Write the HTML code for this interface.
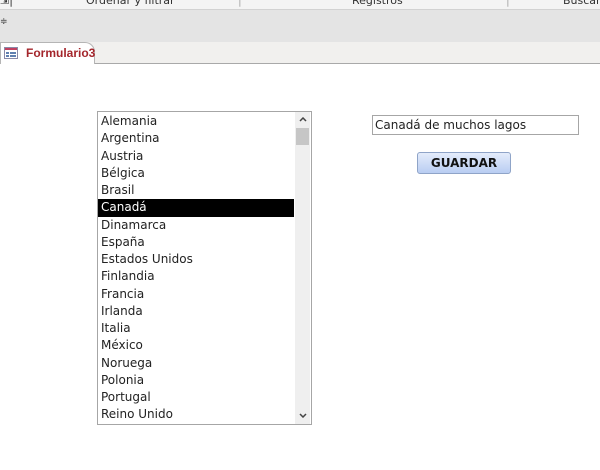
<!DOCTYPE html>
<html><head><meta charset="utf-8"><style>
*{margin:0;padding:0;box-sizing:border-box}
body{width:600px;height:470px;background:#fff;font-family:"DejaVu Sans","Liberation Sans",sans-serif;position:relative;overflow:hidden}
.top{position:absolute;left:0;top:0;width:600px;height:10px;background:#f4f4f4;border-bottom:1px solid #d2d2d2;overflow:hidden;font-size:11px;color:#333}
.top span{position:absolute;top:-6px}
.gray{position:absolute;left:0;top:10px;width:600px;height:32px;background:#e4e4e4}
.tabs{position:absolute;left:0;top:42px;width:600px;height:22px;background:#f1f0ee;border-bottom:1px solid #a9a9a9}
.tab{position:absolute;left:0;top:0;width:95px;height:22px;background:#fff;border:1px solid #b5b5b5;border-bottom:none;border-radius:0 10px 0 0;font-size:12px;font-weight:bold;color:#a4262c;font-family:"Liberation Sans",sans-serif}
.list{position:absolute;left:97px;top:111px;width:215px;height:314px;border:1px solid #a6a6a6;background:#fff;overflow:hidden;padding-top:1px}
.item{height:17.25px;line-height:17px;padding-left:3px;font-size:12px;color:#222;width:196px}
.sel{background:#000;color:#fff}
.sb{position:absolute;right:1px;top:0;width:15px;height:312px;background:#efefef}
.thumb{position:absolute;left:1px;top:16px;width:13px;height:17px;background:#c6c6c6}
.txt{position:absolute;left:372px;top:115px;width:207px;height:20px;border:1px solid #a6a6a6;font-size:12px;line-height:18px;padding-left:2px;color:#222}
.btn{position:absolute;left:417px;top:152px;width:94px;height:22px;border:1px solid #8fa4c8;border-radius:3px;background:linear-gradient(#e4ecfb,#b9cdf2);font-size:12px;font-weight:bold;text-align:center;line-height:20px;color:#111}
</style></head><body>
<div class="top"><span style="left:0">⇲|</span><span style="left:86px">Ordenar y filtrar</span><span style="left:238px;color:#aaa">|</span><span style="left:352px">Registros</span><span style="left:506px;color:#aaa">|</span><span style="left:563px">Buscar</span></div>
<div class="gray"><span style="position:absolute;left:0;top:7px;font-size:9px;color:#333">≑</span></div>
<div class="tabs"><div class="tab">
<svg style="position:absolute;left:3px;top:4px" width="14" height="12"><rect x="0.5" y="0.5" width="13" height="11" fill="#fff" stroke="#8a8aa8"/><rect x="1" y="1" width="12" height="2" fill="#c04060"/><rect x="2" y="5" width="3" height="2" fill="#6080b0"/><rect x="6" y="5" width="6" height="2" fill="#6080b0"/><rect x="2" y="8" width="3" height="2" fill="#6080b0"/><rect x="6" y="8" width="6" height="2" fill="#6080b0"/></svg>
<span style="position:absolute;left:25px;top:3px">Formulario3</span></div></div>
<div class="list">
<div class="item">Alemania</div><div class="item">Argentina</div><div class="item">Austria</div><div class="item">Bélgica</div><div class="item">Brasil</div><div class="item sel">Canadá</div><div class="item">Dinamarca</div><div class="item">España</div><div class="item">Estados Unidos</div><div class="item">Finlandia</div><div class="item">Francia</div><div class="item">Irlanda</div><div class="item">Italia</div><div class="item">México</div><div class="item">Noruega</div><div class="item">Polonia</div><div class="item">Portugal</div><div class="item">Reino Unido</div>
<div class="sb"><svg style="position:absolute;left:4px;top:5px" width="8" height="5"><path d="M1 4L4 1L7 4" stroke="#444" stroke-width="1.5" fill="none"/></svg><div class="thumb"></div><svg style="position:absolute;left:4px;top:301px" width="8" height="5"><path d="M1 1L4 4L7 1" stroke="#444" stroke-width="1.5" fill="none"/></svg></div>
</div>
<div class="txt">Canadá de muchos lagos</div>
<div class="btn">GUARDAR</div>
</body></html>
